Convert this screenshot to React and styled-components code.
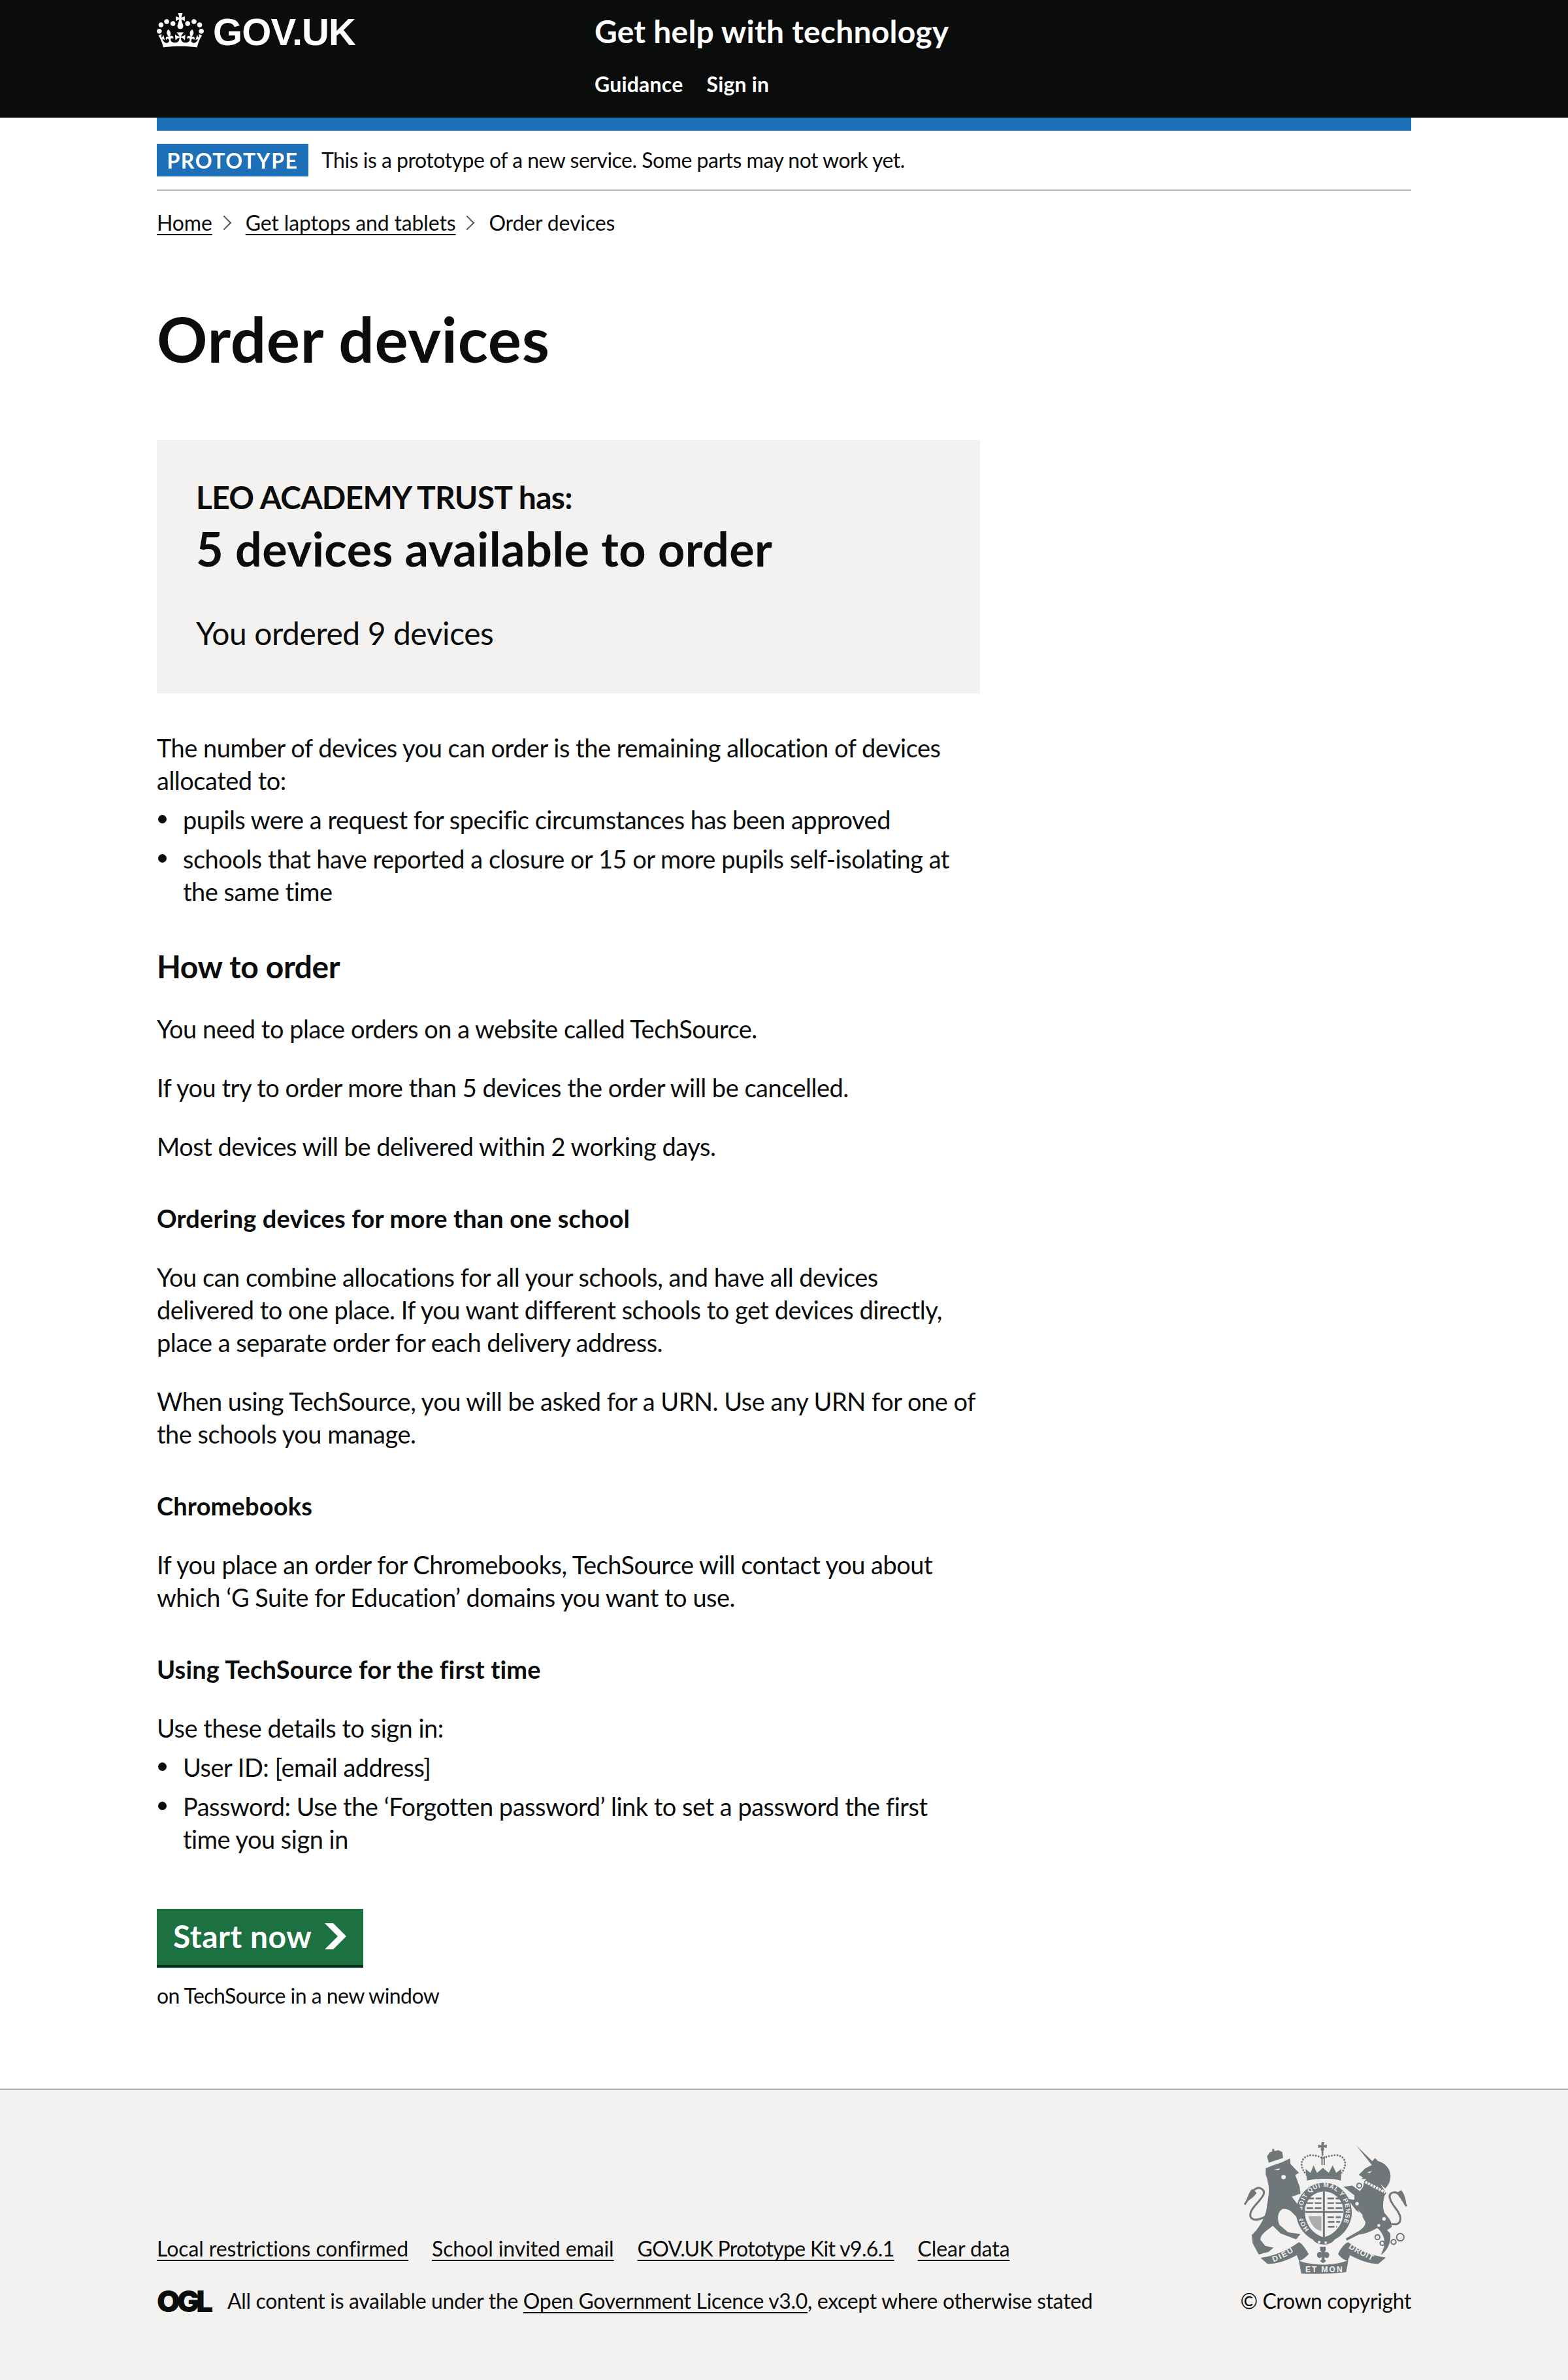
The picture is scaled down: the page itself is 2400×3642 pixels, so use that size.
import React from 'react';
import styled, { createGlobalStyle } from 'styled-components';

const FONT = 'Lato, Arial, sans-serif';
const INK = '#0b0c0c';
const CREST = '#6f777b';
const PANEL = '#f3f2f1';

const GlobalStyle = createGlobalStyle`
  html, body { margin: 0; padding: 0; background: #fff; }
  body { font-family: ${FONT}; color: ${INK}; }
`;

const Wrapper = styled.div`
  width: 1920px;
  margin: 0 auto;
`;

const HeaderBar = styled.header`
  background: ${INK};
  height: 180px;
  color: #fff;
`;

const HeaderInner = styled(Wrapper)`
  display: flex;
`;

const LogoColumn = styled.div`
  width: 670px;
  padding-top: 20px;
  display: flex;
  align-items: flex-start;
`;

const Crown = styled.svg`
  width: 72px;
  height: 53px;
  margin-right: 14px;
  fill: #fff;
`;

const LogoText = styled.span`
  font-family: "Liberation Sans", Arial, sans-serif;
  font-weight: 700;
  font-size: 58px;
  line-height: 58px;
  letter-spacing: -0.9px;
`;

const ServiceName = styled.div`
  font-size: 48px;
  line-height: 50px;
  font-weight: 700;
  letter-spacing: 0.2px;
  margin-top: 23px;
`;

const HeaderNav = styled.nav`
  display: flex;
  gap: 36px;
  margin-top: 31px;
  font-size: 32px;
  line-height: 50px;
  font-weight: 700;
  letter-spacing: 0.2px;
`;

const BlueRule = styled(Wrapper)`
  height: 20px;
  background: #1d70b8;
`;

const PhaseBanner = styled(Wrapper)`
  display: flex;
  align-items: center;
  height: 90px;
  border-bottom: 2px solid #b1b4b6;
  box-sizing: content-box;
`;

const PhaseTag = styled.strong`
  background: #1d70b8;
  color: #fff;
  width: 232px;
  height: 50px;
  display: flex;
  align-items: center;
  justify-content: center;
  font-size: 32px;
  letter-spacing: 1.6px;
  margin-right: 20px;
`;

const PhaseText = styled.span`
  font-size: 32px;
  line-height: 50px;
  letter-spacing: -0.5px;
`;

const Crumbs = styled(Wrapper)`
  display: flex;
  align-items: center;
  margin-top: 24px;
  font-size: 32px;
  line-height: 50px;
  letter-spacing: -0.15px;
`;

const TextLink = styled.a`
  color: ${INK};
  text-decoration: underline;
  text-decoration-thickness: 2px;
  text-underline-offset: 5px;
  letter-spacing: ${({ $squeeze }) => ($squeeze ? '-0.65px' : 'inherit')};
`;

const CrumbChevron = styled.span`
  width: 14px;
  height: 14px;
  margin: 0 25px 0 10px;
  border-top: 2px solid #505a5f;
  border-right: 2px solid #505a5f;
  transform: rotate(45deg);
`;

const Main = styled(Wrapper)`
  padding-bottom: 122px;
`;

const PageTitle = styled.h1`
  font-size: 96px;
  line-height: 100px;
  font-weight: 700;
  letter-spacing: 0.7px;
  margin: 102px 0 105px;
`;

const Column = styled.div`
  width: 1260px;
`;

const Panel = styled.section`
  background: ${PANEL};
  height: 388px;
  box-sizing: border-box;
  padding: 58px 60px 0;
  margin-bottom: 58px;
`;

const PanelLead = styled.div`
  font-size: 48px;
  line-height: 60px;
  font-weight: 700;
  letter-spacing: -0.74px;
`;

const PanelFigure = styled.div`
  font-size: 72px;
  line-height: 80px;
  font-weight: 700;
  letter-spacing: 0.4px;
  margin-top: 8px;
`;

const PanelNote = styled.div`
  font-size: 48px;
  line-height: 60px;
  letter-spacing: -0.44px;
  margin-top: 60px;
`;

const Para = styled.p`
  font-size: 38px;
  line-height: 50px;
  letter-spacing: -0.5px;
  margin: 0 0 ${({ $tight }) => ($tight ? '10px' : '40px')};
`;

const BulletList = styled.ul`
  list-style: none;
  margin: 0 0 ${({ $last }) => ($last ? '82px' : '60px')};
  padding: 0 0 0 40px;
  font-size: 38px;
  line-height: 50px;
  letter-spacing: -0.5px;
`;

const Bullet = styled.li`
  position: relative;
  margin-bottom: 10px;

  &::before {
    content: '';
    position: absolute;
    left: -38px;
    top: 18px;
    width: 13px;
    height: 13px;
    border-radius: 50%;
    background: ${INK};
  }
`;

const SectionTitle = styled.h2`
  font-size: 48px;
  line-height: 60px;
  font-weight: 700;
  letter-spacing: -0.4px;
  margin: 0 0 40px;
`;

const SubTitle = styled.h3`
  font-size: 38px;
  line-height: 50px;
  font-weight: 700;
  letter-spacing: 0.15px;
  margin: 60px 0 40px;
`;

const StartButton = styled.a`
  display: flex;
  align-items: center;
  width: 316px;
  height: 86px;
  box-sizing: border-box;
  padding: 0 0 3px 25px;
  background: #1d7040;
  box-shadow: 0 4px 0 #002d18;
  color: #fff;
  font-size: 48px;
  font-weight: 700;
  letter-spacing: 0.5px;
`;

const StartArrow = styled.svg`
  width: 33px;
  height: 40px;
  margin-left: auto;
  margin-right: 26px;
  fill: #fff;
`;

const ButtonCaption = styled.div`
  font-size: 32px;
  line-height: 40px;
  letter-spacing: -0.55px;
  margin-top: 27px;
`;

const FooterBar = styled.footer`
  background: ${PANEL};
  border-top: 2px solid #b1b4b6;
  height: 446px;
  box-sizing: content-box;
`;

const FooterInner = styled(Wrapper)`
  display: flex;
  justify-content: space-between;
  align-items: flex-end;
  height: 100%;
  box-sizing: border-box;
  padding-bottom: 103px;
  font-size: 32px;
  line-height: 40px;
`;

const FooterLinks = styled.div`
  display: flex;
  gap: 36px;
  margin-bottom: 40px;
  letter-spacing: -0.1px;
`;

const Licence = styled.div`
  display: flex;
  align-items: center;
  letter-spacing: -0.33px;
`;

const OglMark = styled.span`
  font-family: Inter, sans-serif;
  font-weight: 900;
  font-size: 46px;
  line-height: 40px;
  letter-spacing: -5px;
  width: 82px;
  margin-right: 26px;
`;

const CopyrightBlock = styled.div`
  display: flex;
  flex-direction: column;
  align-items: center;
  letter-spacing: -0.4px;
`;

const Crest = styled.svg`
  width: 252px;
  height: 203px;
  margin-bottom: 20px;
  fill: ${CREST};
`;

const CrestText = styled.g`
  fill: ${PANEL};
  font-family: "Liberation Sans", Arial, sans-serif;
  font-weight: 700;
  font-size: ${({ $size }) => $size}px;
`;

const CROWN_PATH = 'M25 30.2c3.5 1.5 7.7-.2 9.1-3.7 1.5-3.6-.2-7.8-3.9-9.2-3.6-1.4-7.6.3-9.1 3.9-1.4 3.5.3 7.5 3.9 9zM9 39.5c3.6 1.5 7.8-.2 9.2-3.7 1.5-3.6-.2-7.8-3.9-9.1-3.6-1.5-7.6.2-9.1 3.8-1.4 3.5.3 7.5 3.8 9zM4.4 57.2c3.5 1.5 7.7-.2 9.1-3.8 1.5-3.6-.2-7.7-3.9-9.1-3.5-1.5-7.6.3-9.1 3.8-1.4 3.5.3 7.6 3.9 9.1zm38.3-21.4c3.5 1.5 7.7-.2 9.1-3.8 1.5-3.6-.2-7.7-3.9-9.1-3.6-1.5-7.6.3-9.1 3.8-1.3 3.6.4 7.7 3.9 9.1zm64.4-5.6c-3.6 1.5-7.8-.2-9.1-3.7-1.5-3.6.2-7.8 3.8-9.2 3.6-1.4 7.7.3 9.2 3.9 1.3 3.5-.4 7.5-3.9 9zm15.9 9.3c-3.6 1.5-7.7-.2-9.1-3.7-1.5-3.6.2-7.8 3.7-9.1 3.6-1.5 7.7.2 9.2 3.8 1.5 3.5-.3 7.5-3.8 9zm4.7 17.7c-3.6 1.5-7.8-.2-9.2-3.8-1.5-3.6.2-7.7 3.9-9.1 3.6-1.5 7.7.3 9.2 3.8 1.3 3.5-.4 7.6-3.9 9.1zM89.3 35.8c-3.6 1.5-7.8-.2-9.2-3.8-1.4-3.6.2-7.7 3.9-9.1 3.6-1.5 7.7.3 9.2 3.8 1.4 3.6-.3 7.7-3.9 9.1zM69.7 17.7l8.9 4.7V9.3l-8.9 2.8c-.2-.3-.5-.6-.9-.9L72.4 0H59.6l3.5 11.2c-.3.3-.6.5-.9.9l-8.8-2.8v13.1l8.8-4.7c.3.3.6.7.9.9l-5 15.4v.1c-.2.8-.4 1.6-.4 2.4 0 4.1 3.1 7.5 7 8.1h.2c.3 0 .7.1 1 .1.4 0 .7 0 1-.1h.2c4-.6 7.1-4.1 7.1-8.1 0-.8-.1-1.7-.4-2.4V34l-5.1-15.4c.4-.2.7-.6 1-.9zM66 92.8c16.9 0 32.8 1.1 47.1 3.2 4-16.9 8.9-26.7 14-33.5l-9.6-3.4c1 4.9 1.1 7.2 0 10.2-1.5-1.4-3-4.3-4.2-8.7L108.6 76c2.8-2 5-3.2 7.5-3.3-4.4 9.4-10 11.9-13.6 11.2-4.3-.8-6.3-4.6-5.6-7.9 1-4.7 5.7-5.9 8-.5 4.3-8.7-3-11.4-7.6-8.8 7.1-7.2 7.9-13.5 2.1-21.1-8 6.1-8.1 12.3-4.5 20.8-4.7-5.4-12.1-2.5-9.5 6.2 3.4-5.2 7.9-2 7.2 3.1-.6 4.3-6.4 7.8-13.5 7.2-10.3-.9-10.9-8-11.2-13.8 2.5-.5 7.1 1.8 11 7.3L80.2 60c-4.1 4.4-8 5.3-12.3 5.4 1.4-4.4 8-11.6 8-11.6H55.5s6.4 7.2 7.9 11.6c-4.2-.1-8-1-12.3-5.4l1.4 16.4c3.9-5.5 8.5-7.7 10.9-7.3-.3 5.8-.9 12.8-11.1 13.8-7.2.6-12.9-2.9-13.5-7.2-.7-5 3.8-8.3 7.1-3.1 2.7-8.7-4.6-11.6-9.4-6.2 3.7-8.5 3.6-14.7-4.6-20.8-5.8 7.6-5 13.9 2.2 21.1-4.7-2.6-11.9.1-7.7 8.8 2.3-5.5 7.1-4.2 8.1.5.7 3.3-1.3 7.1-5.7 7.9-3.5.7-9-1.8-13.5-11.2 2.5.1 4.7 1.3 7.5 3.3l-4.7-15.4c-1.2 4.4-2.7 7.2-4.3 8.7-1.1-3-.9-5.3 0-10.2l-9.5 3.4c5 6.9 9.9 16.7 14 33.5 14.8-2.1 30.8-3.2 47.7-3.2z';

// royal arms, traced by hand in the coordinates of a 3x crop of the logo
const RoyalArms = () => (
  <Crest viewBox="130 85 755 610" role="img" aria-label="Royal coat of arms">
    {/* top crown */}
    <path d="M489 85h12l-2 14 14-3v16l-14-3 2 14h-4v24h-8v-24h-4l2-14-14 3V96l14 3z" />
    <path d="M488 150h6v40h-6zM498 150h6v40h-6z" />
    <path d="M420 235C385 200 390 150 440 145C465 145 485 155 495 160C505 155 530 145 560 145C605 150 610 200 572 235" fill="none" stroke={CREST} strokeWidth="9" strokeLinecap="round" strokeDasharray="0 13" />
    <path d="M415 208L438 226L452 192L468 226L495 204L522 226L540 192L556 226L580 208L578 262C540 250 460 250 422 262Z" />
    {/* shield and garter ring */}
    <path fillRule="evenodd" d="M500 272C572 272 628 334 628 408C628 462 592 512 550 532C540 548 520 556 500 556C478 556 458 548 448 532C406 512 372 462 372 408C372 334 428 272 500 272ZM500 312C452 312 412 354 412 404C412 462 450 510 500 522C550 510 590 462 590 404C590 354 548 312 500 312Z" />
    <path d="M412 401h83v-89h9v89h86v9h-86v112h-9V410h-83z" />
    <g fill="none" stroke={CREST} strokeWidth="8" strokeDasharray="30 8">
      <path d="M424 344h64M420 366h68M420 388h68M516 344h60M516 366h66M516 388h68M516 430h62M518 452h56M518 474h42" />
    </g>
    <path d="M428 425h60v70l-24-10c-16-14-30-36-36-60z" opacity=".55" />
    <CrestText $size={29}>
      <path id="garterArc" d="M432 486A100 112 0 1 1 568 486" fill="none" />
      <text><textPath href="#garterArc" textLength="474">HONI SOIT QUI MAL Y PENSE</textPath></text>
    </CrestText>
    <circle cx="478" cy="545" r="6" fill={PANEL} />
    <circle cx="508" cy="547" r="6" fill={PANEL} />
    {/* lion */}
    <path d="M238 150L250 132L262 128L262 116L270 116L272 126L290 122L308 130L312 158L246 180Z" />
    <path d="M232 205L262 193L305 178L344 160L346 186L385 226L368 236L388 290L392 322L352 336L400 400L405 432L385 440L365 420C345 395 320 385 305 395C285 410 285 440 295 465L335 500L392 508L372 532L340 520L300 505L265 470C240 490 205 510 208 535L230 562L268 570L245 590L200 602L172 550L168 512C195 490 225 440 235 400C240 360 250 320 245 285L238 250L232 235Z" />
    <circle cx="314" cy="246" r="10" fill={PANEL} />
    <path d="M268 212l30-6-6 8z" fill={PANEL} />
    <path d="M235 425C170 462 138 430 180 380C215 340 245 312 205 296C175 290 165 330 135 372" fill="none" stroke={CREST} strokeWidth="9" />
    <path d="M135 372C150 350 175 345 190 318L170 300C155 315 150 335 135 372Z" />
    {/* unicorn */}
    <path d="M648 100L722 172L735 158L748 172C780 180 805 205 806 240C806 262 798 282 782 298L760 278L786 320L778 332C772 360 768 385 778 410C795 430 815 450 812 475L790 490L805 505C808 540 800 575 762 605L775 570C785 535 770 500 745 480C725 490 700 505 660 510L630 525L605 538L600 528L640 505C670 490 695 470 690 450C680 435 675 425 678 420L655 395L662 408C640 400 620 350 600 345L640 350L640 330L590 290L630 285L665 310L680 290L685 265L695 255L670 255L680 248L660 235L690 205L720 190Z" />
    <path d="M690 268L782 316" fill="none" stroke={PANEL} strokeWidth="12" strokeDasharray="10 4" />
    <path d="M698 225l22-8-8 10z" fill={PANEL} />
    <g fill={PANEL}>
      <circle cx="776" cy="438" r="8" />
      <circle cx="752" cy="468" r="7" />
      <circle cx="786" cy="394" r="9" />
    </g>
    <g fill={PANEL} stroke={CREST} strokeWidth="6">
      <circle cx="662" cy="285" r="11" />
      <circle cx="652" cy="368" r="11" />
      <circle cx="746" cy="522" r="11" />
      <circle cx="768" cy="550" r="10" />
      <circle cx="820" cy="544" r="11" />
      <circle cx="851" cy="522" r="17" />
    </g>
    <path d="M812 462C860 470 862 430 830 390C800 350 790 322 820 316C850 314 855 345 880 380" fill="none" stroke={CREST} strokeWidth="9" />
    <path d="M880 380C870 352 850 350 835 318L855 306C870 322 876 345 880 380Z" />
    {/* motto scroll */}
    <path d="M208 617C270 610 330 585 385 545C405 555 420 585 430 600C410 620 395 630 385 630L375 605C330 630 285 645 240 645Z" />
    <path d="M785 615C720 610 660 580 610 545C590 555 570 585 565 600C580 620 600 630 610 630L620 605C665 630 710 645 750 645Z" />
    <path d="M384 630C445 655 545 655 612 628L602 682C550 690 445 692 396 690Z" />
    <path fillRule="evenodd" d="M482 566h26v16l-6 10c14-8 28 6 20 20-6 8-14 6-18 0l-2 12 8 8-14 10-14-10 8-8-2-12c-4 6-12 8-18 0-8-14 6-28 20-20l-8-10z" />
    <CrestText $size={36}>
      <text x="414" y="684" textLength="170">ET MON</text>
      <path id="scrollLeft" d="M268 636C305 622 335 606 368 584" fill="none" />
      <text><textPath href="#scrollLeft" textLength="104">DIEU</textPath></text>
      <path id="scrollRight" d="M612 572C648 594 688 614 726 632" fill="none" />
      <text><textPath href="#scrollRight" textLength="122">DROIT</textPath></text>
    </CrestText>
  </Crest>
);

const App = () => (
  <>
    <GlobalStyle />
    <HeaderBar>
      <HeaderInner>
        <LogoColumn>
          <Crown viewBox="0 0 132 97" role="img" aria-label="Crown">
            <path fillRule="evenodd" d={CROWN_PATH} />
          </Crown>
          <LogoText>GOV.UK</LogoText>
        </LogoColumn>
        <div>
          <ServiceName>Get help with technology</ServiceName>
          <HeaderNav>
            <span>Guidance</span>
            <span>Sign in</span>
          </HeaderNav>
        </div>
      </HeaderInner>
    </HeaderBar>
    <BlueRule />
    <PhaseBanner>
      <PhaseTag>PROTOTYPE</PhaseTag>
      <PhaseText>This is a prototype of a new service. Some parts may not work yet.</PhaseText>
    </PhaseBanner>
    <Crumbs>
      <TextLink>Home</TextLink>
      <CrumbChevron />
      <TextLink>Get laptops and tablets</TextLink>
      <CrumbChevron />
      <span>Order devices</span>
    </Crumbs>
    <Main>
      <PageTitle>Order devices</PageTitle>
      <Column>
        <Panel>
          <PanelLead>LEO ACADEMY TRUST has:</PanelLead>
          <PanelFigure>5 devices available to order</PanelFigure>
          <PanelNote>You ordered 9 devices</PanelNote>
        </Panel>
        <Para $tight>The number of devices you can order is the remaining allocation of devices allocated to:</Para>
        <BulletList>
          <Bullet>pupils were a request for specific circumstances has been approved</Bullet>
          <Bullet>schools that have reported a closure or 15 or more pupils self-isolating at the same time</Bullet>
        </BulletList>
        <SectionTitle>How to order</SectionTitle>
        <Para>You need to place orders on a website called TechSource.</Para>
        <Para>If you try to order more than 5 devices the order will be cancelled.</Para>
        <Para>Most devices will be delivered within 2 working days.</Para>
        <SubTitle>Ordering devices for more than one school</SubTitle>
        <Para>You can combine allocations for all your schools, and have all devices delivered to one place. If you want different schools to get devices directly, place a separate order for each delivery address.</Para>
        <Para>When using TechSource, you will be asked for a URN. Use any URN for one of the schools you manage.</Para>
        <SubTitle>Chromebooks</SubTitle>
        <Para>If you place an order for Chromebooks, TechSource will contact you about which ‘G Suite for Education’ domains you want to use.</Para>
        <SubTitle>Using TechSource for the first time</SubTitle>
        <Para $tight>Use these details to sign in:</Para>
        <BulletList $last>
          <Bullet>User ID: [email address]</Bullet>
          <Bullet>Password: Use the ‘Forgotten password’ link to set a password the first time you sign in</Bullet>
        </BulletList>
        <StartButton>
          Start now
          <StartArrow viewBox="0 0 33 40" aria-hidden="true">
            <path d="M0 0h13l20 20-20 20H0l20-20z" />
          </StartArrow>
        </StartButton>
        <ButtonCaption>on TechSource in a new window</ButtonCaption>
      </Column>
    </Main>
    <FooterBar>
      <FooterInner>
        <div>
          <FooterLinks>
            <TextLink>Local restrictions confirmed</TextLink>
            <TextLink>School invited email</TextLink>
            <TextLink $squeeze>GOV.UK Prototype Kit v9.6.1</TextLink>
            <TextLink>Clear data</TextLink>
          </FooterLinks>
          <Licence>
            <OglMark>OGL</OglMark>
            <span>
              All content is available under the <TextLink>Open Government Licence v3.0</TextLink>, except where otherwise stated
            </span>
          </Licence>
        </div>
        <CopyrightBlock>
          <RoyalArms />
          <span>© Crown copyright</span>
        </CopyrightBlock>
      </FooterInner>
    </FooterBar>
  </>
);

export default App;
